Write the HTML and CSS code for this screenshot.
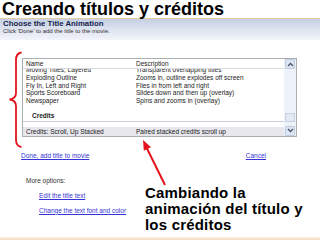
FILE: index.html
```html
<!DOCTYPE html>
<html lang="es">
<head>
    <meta charset="UTF-8">
    <meta name="viewport" content="width=device-width, initial-scale=1.0">
    <title>Creando títulos y créditos</title>
    <link rel="stylesheet" href="styles.css">
</head>
<body>
    <h1 class="slide-title">Creando títulos y créditos</h1>

    <div class="panel-head">
        <div class="panel-title">Choose the Title Animation</div>
        <div class="panel-hint">Click 'Done' to add the title to the movie.</div>
    </div>

    <div class="list">
        <div class="list-main">
            <div class="row list-head"><span>Name</span><span>Description</span></div>
            <div class="rows">
                <div class="rows-inner">
                    <div class="row"><span>Moving Titles, Layered</span><span>Transparent overlapping titles</span></div>
                    <div class="row"><span>Exploding Outline</span><span>Zooms in, outline explodes off screen</span></div>
                    <div class="row"><span>Fly In, Left and Right</span><span>Flies in from left and right</span></div>
                    <div class="row"><span>Sports Scoreboard</span><span>Slides down and then up (overlay)</span></div>
                    <div class="row"><span>Newspaper</span><span>Spins and zooms in (overlay)</span></div>
                </div>
            </div>
            <div class="group">Credits</div>
            <div class="row selected"><span>Credits: Scroll, Up Stacked</span><span>Paired stacked credits scroll up</span></div>
        </div>
        <div class="scrollbar">
            <div class="sb-btn">
                <svg width="7" height="5" viewBox="0 0 7 5"><path d="M1 4 L3.5 1.5 L6 4" fill="none" stroke="#4a5670" stroke-width="1.3"/></svg>
            </div>
            <div class="sb-track"><div class="sb-thumb"></div></div>
            <div class="sb-btn">
                <svg width="7" height="5" viewBox="0 0 7 5"><path d="M1 1 L3.5 3.5 L6 1" fill="none" stroke="#4a5670" stroke-width="1.3"/></svg>
            </div>
        </div>
    </div>

    <div class="actions">
        <a href="#">Done, add title to movie</a>
        <a href="#">Cancel</a>
    </div>

    <div class="bottom">
        <div class="more">
            <div>More options:</div>
            <a class="option" href="#">Edit the title text</a>
            <a class="option" href="#">Change the text font and color</a>
        </div>
        <div class="caption">Cambiando la animación del título y los créditos</div>
    </div>

    <div class="slide-edge"></div>

    <!-- red annotations drawn over the screenshot -->
    <svg class="marks" width="320" height="240" viewBox="0 0 320 240">
        <path d="M21.5 52.5 C18 53 16 55.5 16 60 L16 93 C16 96.5 13.5 99 9.5 99.5 C13.5 100 16 102.5 16 106 L16 140 C16 144 18 146.5 21.5 147" fill="none" stroke="#e3141c" stroke-width="1.8"/>
        <line x1="165" y1="185" x2="146.5" y2="147.5" stroke="#e3141c" stroke-width="2"/>
        <polygon points="143,140 151,147.2 143.8,150.8" fill="#e3141c"/>
    </svg>
</body>
</html>
```

FILE: styles.css
```css
body {
    position: relative;
    display: flex;
    flex-direction: column;
    width: 320px;
    height: 240px;
    margin: 0;
    overflow: hidden;
    font-family: "Liberation Sans", Arial, sans-serif;
    background-color: #fff;
    color: #222;
}

.slide-title {
    margin: 0;
    padding-left: 2px;
    font-size: 18px;
    line-height: 18px;
    font-weight: bold;
    color: #000;
    border-bottom: 1px solid #e7c9a2;
}

.panel-head {
    height: 21px;
    padding: 1px 3px 0;
    box-sizing: border-box;
    background: linear-gradient(to bottom, #c6d0e4, #f3f5fa);
}

.panel-title {
    font-size: 7.8px;
    line-height: 8px;
    font-weight: bold;
    color: #14224a;
}

.panel-hint {
    font-size: 6px;
    line-height: 7px;
    color: #333;
}

.list {
    display: flex;
    width: 275px;
    margin: 18px 0 0 22px;
    border: 1px solid #a9adb4;
    box-sizing: border-box;
    font-size: 6.5px;
}

.list-main {
    flex: 1;
}

.row {
    display: grid;
    grid-template-columns: 110px 1fr;
    padding-left: 3px;
    line-height: 7.75px;
    white-space: nowrap;
}

.list-head {
    line-height: 9px;
    border-bottom: 1px solid #d9dbe0;
}

.rows {
    overflow: hidden;
    height: 35.75px;
}

.rows-inner {
    margin-top: -3px;
}

.group {
    padding: 7px 0 1px 9px;
    line-height: 8px;
    font-weight: bold;
    border-bottom: 1px solid #c7cfdc;
}

.selected {
    margin-top: 5px;
    line-height: 9px;
    background-color: #e6e6ec;
}

.scrollbar {
    display: flex;
    flex-direction: column;
    width: 12px;
    background-color: #eef2fa;
}

.sb-btn {
    display: flex;
    align-items: center;
    justify-content: center;
    height: 8px;
    margin: 0 1px;
    background-color: #dce5f3;
    border: 1px solid #c0cbdc;
    border-radius: 1px;
}

.sb-track {
    flex: 1;
    display: flex;
    flex-direction: column;
    justify-content: flex-end;
    align-items: center;
}

.sb-thumb {
    width: 8px;
    height: 7px;
    margin-bottom: 4px;
    background-color: #e3e9f3;
    border: 1px solid #c8d1df;
}

a {
    color: #3434d6;
    text-decoration: underline;
}

.actions {
    display: flex;
    justify-content: space-between;
    margin-top: 15px;
    padding: 0 54px 0 21px;
    font-size: 6.5px;
    line-height: 8px;
}

.bottom {
    display: flex;
    margin-top: 13px;
}

.more {
    display: flex;
    flex: none;
    flex-direction: column;
    align-items: flex-start;
    width: 145px;
    padding-left: 26px;
    box-sizing: border-box;
    font-size: 6.5px;
    line-height: 15px;
    white-space: nowrap;
    color: #333;
}

.option {
    margin-left: 13px;
}

.caption {
    width: 164px;
    padding-top: 12px;
    font-size: 15px;
    line-height: 16px;
    font-weight: bold;
    letter-spacing: 0.2px;
    color: #000;
}

.slide-edge {
    margin-top: auto;
    height: 3px;
    background: linear-gradient(to bottom, #fbf1e6, #f1d8bb);
}

.marks {
    position: absolute;
    left: 0;
    top: 0;
    pointer-events: none;
}
```
